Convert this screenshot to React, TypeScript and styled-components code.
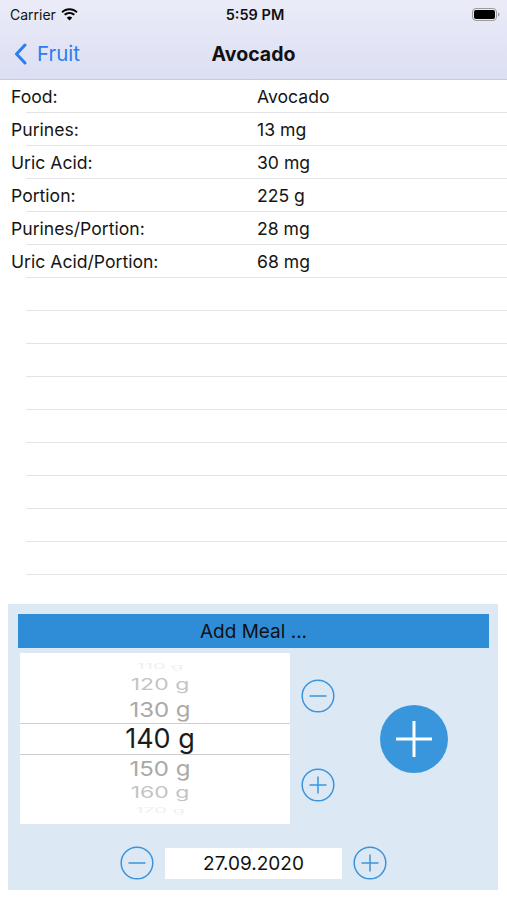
import styled, { createGlobalStyle } from 'styled-components';

const GlobalStyle = createGlobalStyle`
  html, body {
    margin: 0;
    padding: 0;
    background: #ffffff;
  }
  body {
    font-family: Inter, "Liberation Sans", Arial, sans-serif;
    color: #111;
  }
`;

interface InfoRow {
  label: string;
  value: string;
}

const infoRows: InfoRow[] = [
  { label: 'Food:', value: 'Avocado' },
  { label: 'Purines:', value: '13 mg' },
  { label: 'Uric Acid:', value: '30 mg' },
  { label: 'Portion:', value: '225 g' },
  { label: 'Purines/Portion:', value: '28 mg' },
  { label: 'Uric Acid/Portion:', value: '68 mg' },
];

interface PickerItem {
  text: string;
  level: number;
}

const pickerItems: PickerItem[] = [
  { text: '110 g', level: 3 },
  { text: '120 g', level: 2 },
  { text: '130 g', level: 1 },
  { text: '140 g', level: 0 },
  { text: '150 g', level: 1 },
  { text: '160 g', level: 2 },
  { text: '170 g', level: 3 },
];

const WifiIcon = () => (
  <svg width="17" height="13" viewBox="0 0 17 13">
    <path d="M8.5 2.2c2.6 0 5 1 6.8 2.7l1.3-1.4C14.4 1.4 11.6 0.2 8.5 0.2S2.6 1.4 0.4 3.5l1.3 1.4C3.5 3.2 5.9 2.2 8.5 2.2z" fill="#000" />
    <path d="M8.5 5.9c1.6 0 3 0.6 4.2 1.6l1.3-1.4C12.5 4.7 10.6 3.9 8.5 3.9S4.5 4.7 3 6.1l1.3 1.4C5.5 6.5 6.9 5.9 8.5 5.9z" fill="#000" />
    <path d="M8.5 12.6l2.7-2.9C10.5 9 9.5 8.6 8.5 8.6S6.5 9 5.8 9.7z" fill="#000" />
  </svg>
);

const BatteryIcon = () => (
  <svg width="28" height="13" viewBox="0 0 28 13">
    <rect x="0.5" y="0.5" width="24" height="12" rx="3.5" fill="none" stroke="#9a9a9a" />
    <rect x="2" y="2" width="21" height="9" rx="2" fill="#000" />
    <path d="M26 4.5v4c0.9-0.3 1.5-1.1 1.5-2s-0.6-1.7-1.5-2z" fill="#9a9a9a" />
  </svg>
);

const ChevronIcon = () => (
  <svg width="13" height="22" viewBox="0 0 13 22">
    <path d="M11 2L2.5 11 11 20" fill="none" stroke="#2a7ef0" strokeWidth="3" strokeLinecap="round" strokeLinejoin="round" />
  </svg>
);

const RoundIcon = ({ plus }: { plus?: boolean }) => (
  <svg width="34" height="34" viewBox="0 0 34 34">
    <circle cx="17" cy="17" r="15.8" fill="none" stroke="#3a94dc" strokeWidth="1.5" />
    <line x1="8.5" y1="17" x2="25.5" y2="17" stroke="#3a94dc" strokeWidth="1.5" />
    {plus && <line x1="17" y1="8.5" x2="17" y2="25.5" stroke="#3a94dc" strokeWidth="1.5" />}
  </svg>
);

const BigPlusIcon = () => (
  <svg width="36" height="36" viewBox="0 0 36 36">
    <line x1="0" y1="18" x2="36" y2="18" stroke="#fff" strokeWidth="3" />
    <line x1="18" y1="0" x2="18" y2="36" stroke="#fff" strokeWidth="3" />
  </svg>
);

const App = () => {
  return (
    <>
      <GlobalStyle />
      <Screen>
        <Header>
          <StatusBar>
            <Carrier>
              Carrier <WifiIcon />
            </Carrier>
            <Clock>5:59 PM</Clock>
            <BatteryWrap>
              <BatteryIcon />
            </BatteryWrap>
          </StatusBar>
          <NavBar>
            <BackButton>
              <ChevronIcon />
              <span>Fruit</span>
            </BackButton>
            <NavTitle>Avocado</NavTitle>
          </NavBar>
        </Header>

        <Table>
          {infoRows.map((row) => (
            <Row key={row.label}>
              <Label>{row.label}</Label>
              <Value>{row.value}</Value>
            </Row>
          ))}
          {Array.from({ length: 9 }).map((_, i) => (
            <Row key={i} />
          ))}
        </Table>

        <Panel>
          <MealBar>Add Meal ...</MealBar>
          <PickerRow>
            <Picker>
              {pickerItems.map((item) => (
                <PickerOption key={item.text} $level={item.level}>
                  <span>{item.text}</span>
                </PickerOption>
              ))}
            </Picker>
            <StepColumn>
              <RoundButton>
                <RoundIcon />
              </RoundButton>
              <RoundButton>
                <RoundIcon plus />
              </RoundButton>
            </StepColumn>
            <BigButton>
              <BigPlusIcon />
            </BigButton>
          </PickerRow>
          <DateRow>
            <RoundButton>
              <RoundIcon />
            </RoundButton>
            <DateBox>27.09.2020</DateBox>
            <RoundButton>
              <RoundIcon plus />
            </RoundButton>
          </DateRow>
        </Panel>
      </Screen>
    </>
  );
};

export default App;

const Screen = styled.div`
  width: 507px;
  height: 900px;
  display: flex;
  flex-direction: column;
  background: #fff;
  overflow: hidden;
`;

const Header = styled.div`
  background: linear-gradient(#ebecf8, #dcdef3);
  border-bottom: 1px solid #c9cad6;
`;

const StatusBar = styled.div`
  height: 28px;
  display: grid;
  grid-template-columns: 1fr auto 1fr;
  align-items: center;
  padding: 0 7px 0 10px;
  font-size: 14px;
`;

const Carrier = styled.div`
  display: flex;
  align-items: center;
  gap: 5px;
  color: #111;
`;

const Clock = styled.div`
  font-weight: 600;
  font-size: 14.5px;
`;

const BatteryWrap = styled.div`
  display: flex;
  justify-content: flex-end;
`;

const NavBar = styled.div`
  height: 51px;
  position: relative;
  display: flex;
  align-items: center;
  padding: 0 14px;
`;

const BackButton = styled.div`
  display: flex;
  align-items: center;
  gap: 10px;
  color: #2a7ef0;
  font-size: 20.5px;
`;

const NavTitle = styled.div`
  position: absolute;
  left: 0;
  right: 0;
  text-align: center;
  font-size: 19.5px;
  font-weight: 700;
  pointer-events: none;
`;

const Table = styled.div`
  display: flex;
  flex-direction: column;
`;

const Row = styled.div`
  height: 33px;
  display: grid;
  grid-template-columns: 246px 1fr;
  align-items: center;
  padding-left: 11px;
  position: relative;
  font-size: 17.6px;

  &::after {
    content: '';
    position: absolute;
    left: 26px;
    right: 0;
    bottom: 0;
    height: 1px;
    background: #e4e4e8;
  }
`;

const Label = styled.span`
  color: #151515;
`;

const Value = styled.span`
  color: #151515;
`;

const Panel = styled.div`
  margin: 29px 9px 0 8px;
  height: 286px;
  background: #dce8f4;
  padding: 10px 9px 0 10px;
  box-sizing: border-box;
  display: flex;
  flex-direction: column;
`;

const MealBar = styled.div`
  height: 34px;
  background: #2f8dd8;
  display: flex;
  align-items: center;
  justify-content: center;
  font-size: 19px;
  color: #111;
`;

const PickerRow = styled.div`
  display: flex;
  margin-top: 5px;
  padding-left: 2px;
`;

const Picker = styled.div`
  width: 270px;
  height: 171px;
  background: #fff;
  display: flex;
  flex-direction: column;
  justify-content: center;
  overflow: hidden;
`;

const levelStyles = [
  { h: 32, size: 27, color: '#1c1c1c', scale: 1 },
  { h: 27, size: 24, color: '#a9a9a9', scale: 0.86 },
  { h: 22, size: 23, color: '#c4c4c4', scale: 0.68 },
  { h: 14, size: 20, color: '#f0f0f0', scale: 0.35 },
];

const PickerOption = styled.div<{ $level: number }>`
  height: ${({ $level }) => levelStyles[$level].h}px;
  flex: none;
  display: flex;
  align-items: center;
  justify-content: center;
  padding-left: 10px;
  font-size: ${({ $level }) => levelStyles[$level].size}px;
  color: ${({ $level }) => levelStyles[$level].color};
  border-top: ${({ $level }) => ($level === 0 ? '1px solid #cfcfcf' : 'none')};
  border-bottom: ${({ $level }) => ($level === 0 ? '1px solid #cfcfcf' : 'none')};
  box-sizing: border-box;

  span {
    display: inline-block;
    transform: scaleY(${({ $level }) => levelStyles[$level].scale});
  }
`;

const StepColumn = styled.div`
  display: flex;
  flex-direction: column;
  gap: 55px;
  padding-top: 26px;
  margin-left: 11px;
`;

const RoundButton = styled.div`
  width: 34px;
  height: 34px;
  display: flex;
`;

const BigButton = styled.div`
  width: 68px;
  height: 68px;
  border-radius: 50%;
  background: #3a96dc;
  display: flex;
  align-items: center;
  justify-content: center;
  align-self: center;
  margin-left: 45px;
`;

const DateRow = styled.div`
  display: flex;
  align-items: center;
  justify-content: center;
  gap: 11px;
  margin-top: 22px;
`;

const DateBox = styled.div`
  width: 177px;
  height: 31px;
  background: #fff;
  display: flex;
  align-items: center;
  justify-content: center;
  font-size: 19px;
  color: #111;
`;
